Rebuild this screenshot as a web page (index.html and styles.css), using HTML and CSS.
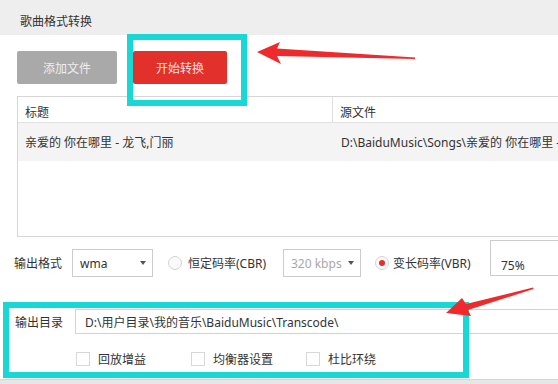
FILE: index.html
```html
<!DOCTYPE html>
<html lang="zh-CN">
<head>
<meta charset="utf-8">
<title>歌曲格式转换</title>
<link rel="stylesheet" href="styles.css">
</head>
<body>
<div class="app">
  <header class="titlebar">歌曲格式转换</header>
  <div class="toolbar">
    <button class="btn btn-gray">添加文件</button>
    <button class="btn btn-red">开始转换</button>
  </div>
  <div class="table">
    <div class="row head">
      <div class="cell c1">标题</div>
      <div class="cell c2">源文件</div>
    </div>
    <div class="row data">
      <div class="cell c1">亲爱的 你在哪里 - 龙飞,门丽</div>
      <div class="cell c2">D:\BaiduMusic\Songs\亲爱的 你在哪里 - 龙飞,门丽.mp3</div>
    </div>
  </div>
  <div class="format-row">
    <span class="label">输出格式</span>
    <div class="select s1"><span>wma</span><i class="caret"></i></div>
    <span class="radio r1"></span><span class="rlabel l1">恒定码率(CBR)</span>
    <div class="select s2 disabled"><span>320 kbps</span><i class="caret"></i></div>
    <span class="radio r2 on"></span><span class="rlabel l2">变长码率(VBR)</span>
    <div class="quality">75%</div>
  </div>
  <div class="dir-row">
    <span class="label dlabel">输出目录</span>
    <div class="path">D:\用户目录\我的音乐\BaiduMusic\Transcode\</div>
  </div>
  <div class="check-row">
    <label class="check"><span class="box"></span>回放增益</label>
    <label class="check"><span class="box"></span>均衡器设置</label>
    <label class="check"><span class="box"></span>杜比环绕</label>
  </div>
  <div class="bottom-bar"></div>
  <svg class="annot" width="558" height="384" viewBox="0 0 558 384">
    <rect x="130" y="37" width="114" height="66" fill="none" stroke="#19d7d4" stroke-width="6"/>
    <rect x="6" y="305" width="460" height="70" fill="none" stroke="#19d7d4" stroke-width="6"/>
    <polygon points="257,52 280,42 277,48.5 415,57.5 415,59 277,56 281,64" fill="#ee2a2c"/>
    <polygon points="446,313 462,298 466,304 533,287.5 533.5,289 468,310 471,316" fill="#ee2a2c"/>
  </svg>
</div>
</body>
</html>
```
FILE: styles.css
```css
* { box-sizing: border-box; }
html, body { margin: 0; padding: 0; background: #fff; }
body {
  font-family: "Noto Sans", "Noto Sans CJK SC", sans-serif;
  font-size: 12px;
  color: #333;
}
.app {
  position: relative;
  width: 558px;
  height: 384px;
  overflow: hidden;
  background: #fff;
}
.titlebar {
  height: 35px;
  background: #eeeeee;
  display: flex;
  align-items: center;
  padding: 6px 0 0 20px;
  font-size: 12px;
  color: #333;
}
.toolbar {
  display: flex;
  gap: 16px;
  padding: 16px 0 0 17px;
}
.btn {
  height: 33px;
  border: 0;
  border-radius: 2px;
  font-family: inherit;
  font-size: 12px;
  padding: 0;
}
.btn-gray { width: 100px; background: #a9a9a9; color: #eeeeee; }
.btn-red { width: 94px; background: #e2302a; color: #fbe6e4; }

.table {
  margin: 12px 0 0 17px;
  width: 560px;
  height: 141px;
  border: 1px solid #d6d6d6;
}
.row { display: flex; white-space: nowrap; }
.row.head {
  height: 26px;
  border-bottom: 1px solid #e0e0e0;
  align-items: center;
  padding-top: 4px;
}
.row.data {
  height: 38px;
  background: #f4f4f4;
  align-items: center;
}
.cell { padding-left: 7px; overflow: hidden; }
.c1 { width: 315px; flex: none; }
.row.head .c1 { border-right: 1px solid #e0e0e0; height: 25px; margin-top: -4px; padding-top: 4px; display: flex; align-items: center; }
.row.data .c1 { width: 316px; }
.c2 { flex: 1; }

.format-row {
  display: flex;
  align-items: center;
  height: 28px;
  margin-top: 12px;
  padding-left: 14px;
  white-space: nowrap;
}
.label { width: 58px; flex: none; }
.select {
  height: 28px;
  border: 1px solid #cccccc;
  display: flex;
  align-items: center;
  justify-content: space-between;
  padding: 0 6px 0 7px;
  flex: none;
  background: #fff;
}
.s1 { width: 81px; }
.s2 { width: 78px; }
.select.disabled span { color: #a8a8a8; }
.caret {
  width: 0; height: 0;
  border-left: 3.5px solid transparent;
  border-right: 3.5px solid transparent;
  border-top: 4px solid #555;
}
.radio {
  width: 14px; height: 14px;
  border-radius: 50%;
  border: 1px solid #d4d4d4;
  background: #fafafa;
  flex: none;
  display: flex;
  align-items: center;
  justify-content: center;
}
.radio.on::after {
  content: "";
  width: 6px; height: 6px;
  border-radius: 50%;
  background: #e2302a;
}
.r1 { margin-left: 15px; }
.r2 { margin-left: 14px; }
.rlabel { flex: none; }
.l1 { margin-left: 6px; width: 95px; }
.l2 { margin-left: 4px; width: 97px; }
.quality {
  align-self: flex-end;
  margin-bottom: 1px;
  height: 36px;
  width: 100px;
  flex: none;
  border: 1px solid #cccccc;
  padding: 14px 0 0 10px;
  display: flex;
  align-items: center;
}

.dir-row {
  display: flex;
  align-items: center;
  height: 25px;
  margin-top: 32px;
  padding-left: 15px;
  white-space: nowrap;
}
.dlabel { width: 60px; }
.path {
  flex: none;
  width: 500px;
  height: 25px;
  border: 1px solid #d4d4d4;
  display: flex;
  align-items: center;
  padding-left: 9px;
}

.check-row {
  display: flex;
  height: 14px;
  margin-top: 18px;
  padding-left: 76px;
}
.check {
  width: 115px;
  display: flex;
  align-items: center;
  white-space: nowrap;
}
.box {
  width: 14px; height: 14px;
  border: 1px solid #d8d8d8;
  background: #fff;
  margin-right: 8px;
  flex: none;
}
.bottom-bar {
  margin-top: 13px;
  height: 6px;
  background: #e6e6e6;
  border-top: 1px solid #d6d6d6;
}
.annot {
  position: absolute;
  left: 0;
  top: 0;
  pointer-events: none;
}
```
